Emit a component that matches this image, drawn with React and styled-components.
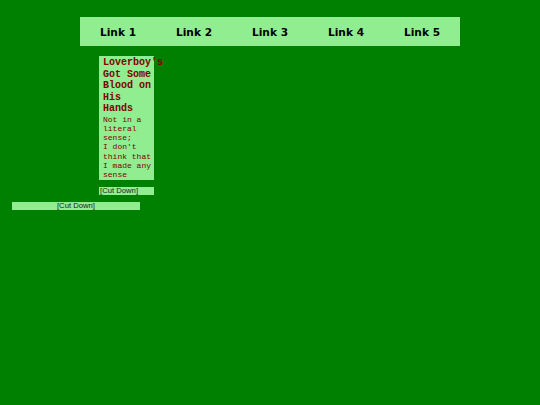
import React from "react";
import styled, { createGlobalStyle } from "styled-components";

const Global = createGlobalStyle`
  html, body { margin: 0; padding: 0; background: #008000; }
  body { width: 540px; height: 405px; overflow: hidden; font-family: "DejaVu Sans", sans-serif; }
`;

const Page = styled.div`
  display: flex;
  flex-direction: column;
  padding-top: 17px;
`;

const Nav = styled.nav`
  width: 380px;
  height: 29px;
  margin: 0 auto;
  background: #90ee90;
  display: flex;
`;

const NavLink = styled.a`
  flex: 1;
  display: flex;
  align-items: center;
  justify-content: center;
  font-family: "DejaVu Sans", Verdana, sans-serif;
  font-weight: bold;
  font-size: 10.6px;
  color: #000;
  text-decoration: none;
  padding-top: 1px;
`;

const Section = styled.div`
  display: flex;
  flex-direction: column;
  align-items: flex-start;
  margin-top: 10px;
  margin-left: 99px;
  gap: 7px;
`;

const Card = styled.article`
  width: 55px;
  box-sizing: border-box;
  padding: 1px 0 0 4px;
  background: #90ee90;
  color: #800000;
  font-family: "Liberation Mono", "Courier New", monospace;
`;

const Title = styled.h2`
  margin: 0;
  font-size: 10px;
  line-height: 11.5px;
  font-weight: bold;
  width: 48px;
`;

const Body = styled.p`
  margin: 0;
  font-size: 8px;
  line-height: 9.3px;
  width: 50px;
`;

const CutButton = styled.button`
  display: block;
  box-sizing: border-box;
  border: none;
  margin: 0;
  padding: 0 1px;
  height: 8px;
  width: ${(p) => p.$w}px;
  background: #90ee90;
  color: #222;
  font-family: "Liberation Sans", Arial, sans-serif;
  font-size: 7.7px;
  line-height: 8px;
  text-align: ${(p) => p.$align};
  cursor: pointer;
`;

const Bottom = styled.div`
  margin-top: 7px;
  margin-left: 12px;
`;

export default function App() {
  const links = ["Link 1", "Link 2", "Link 3", "Link 4", "Link 5"];
  return (
    <>
      <Global />
      <Page>
        <Nav>
          {links.map((l) => (
            <NavLink key={l} href="#">{l}</NavLink>
          ))}
        </Nav>
        <Section>
          <Card>
            <Title>Loverboy's Got Some Blood on His Hands</Title>
            <Body>
              Not in a literal sense;
              <br />
              I don't think that I made any sense
            </Body>
          </Card>
          <CutButton $w={55} $align="left">[Cut Down]</CutButton>
        </Section>
        <Bottom>
          <CutButton $w={128} $align="center">[Cut Down]</CutButton>
        </Bottom>
      </Page>
    </>
  );
}
